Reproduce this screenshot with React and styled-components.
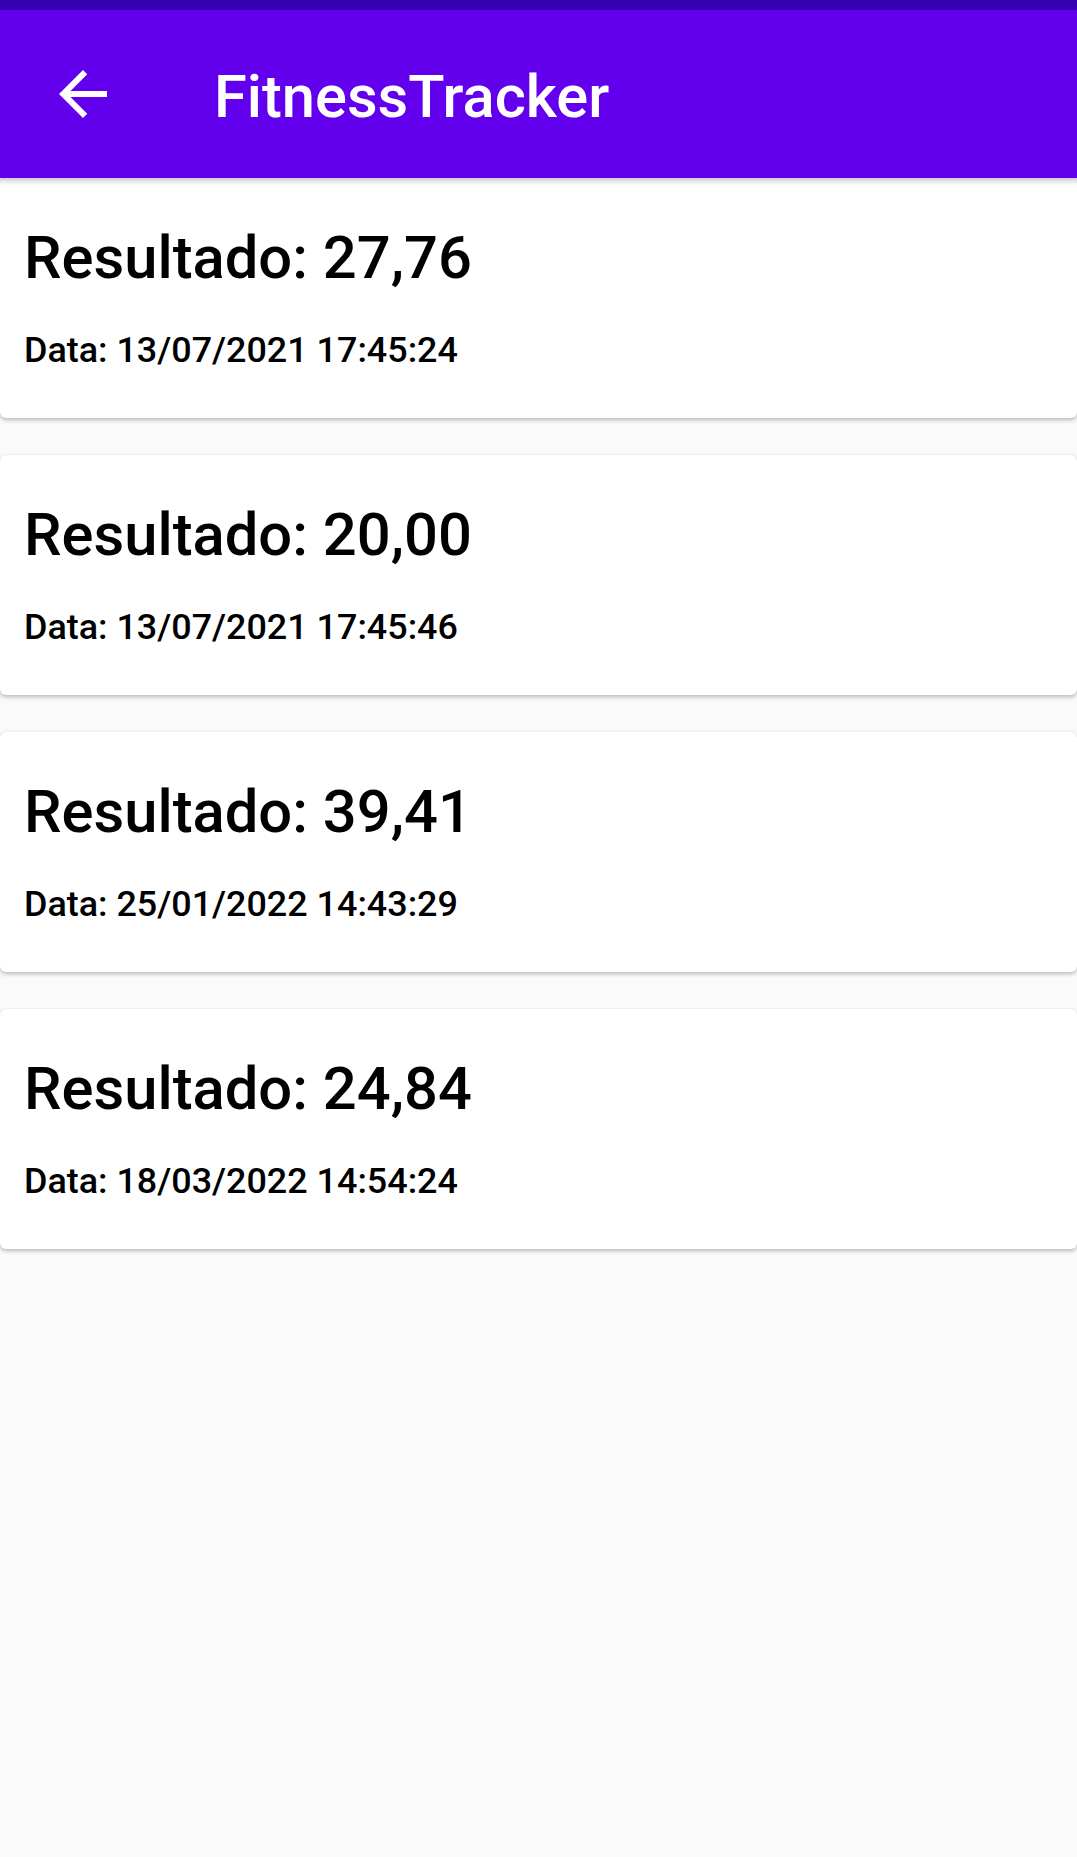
import React from "react";
import styled, { createGlobalStyle } from "styled-components";

const GlobalStyle = createGlobalStyle`
  html, body {
    margin: 0;
    padding: 0;
    background: #fafafa;
  }
  body {
    font-family: Roboto, "Noto Sans", "Liberation Sans", sans-serif;
  }
  #root {
    min-height: 100vh;
    background: #fafafa;
  }
`;

const Screen = styled.div`
  display: flex;
  flex-direction: column;
  min-height: 1857px;
  background: #fafafa;
`;

const StatusBar = styled.div`
  height: 10px;
  background: #3700b3;
`;

const AppBar = styled.header`
  position: relative;
  z-index: 2;
  display: flex;
  align-items: center;
  height: 168px;
  background: #6200ee;
  box-shadow: 0 3px 6px rgba(0, 0, 0, 0.22);
`;

const BackButton = styled.button`
  display: flex;
  align-items: center;
  justify-content: center;
  width: 72px;
  height: 72px;
  margin-left: 47px;
  padding: 0;
  border: none;
  background: transparent;
  color: #ffffff;
  cursor: pointer;
`;

const Title = styled.h1`
  margin: 0 0 0 95px;
  padding-top: 5px;
  font-family: Roboto, "Noto Sans", sans-serif;
  font-weight: 500;
  font-size: 59.6px;
  color: #ffffff;
  letter-spacing: 0;
`;

const List = styled.main`
  display: flex;
  flex-direction: column;
  gap: 37px;
`;

const Card = styled.article`
  display: flex;
  flex-direction: column;
  height: 240px;
  box-sizing: border-box;
  padding: 45px 24px 0 24px;
  background: #ffffff;
  border-radius: 6px;
  box-shadow: 0 2px 4px rgba(0, 0, 0, 0.26), 0 0 1px rgba(0, 0, 0, 0.12);
`;

const Result = styled.div`
  font-family: Roboto, "Noto Sans", sans-serif;
  font-weight: 500;
  font-size: 59.7px;
  line-height: 70px;
  color: #000000;
`;

const DateLine = styled.div`
  margin-top: 36px;
  font-family: Roboto, "Noto Sans", sans-serif;
  font-weight: 500;
  font-size: 35.9px;
  line-height: 42px;
  color: #000000;
`;

const ArrowBack = () => (
  <svg width="72" height="72" viewBox="0 0 24 24" fill="currentColor" aria-hidden="true">
    <path d="M20 11H7.83l5.59-5.59L12 4l-8 8 8 8 1.41-1.41L7.83 13H20v-2z" />
  </svg>
);

const results = [
  { value: "27,76", date: "13/07/2021 17:45:24" },
  { value: "20,00", date: "13/07/2021 17:45:46" },
  { value: "39,41", date: "25/01/2022 14:43:29" },
  { value: "24,84", date: "18/03/2022 14:54:24" },
];

export default function App() {
  return (
    <>
      <GlobalStyle />
      <Screen>
        <StatusBar />
        <AppBar>
          <BackButton aria-label="Voltar">
            <ArrowBack />
          </BackButton>
          <Title>FitnessTracker</Title>
        </AppBar>
        <List>
          {results.map((r) => (
            <Card key={r.date}>
              <Result>Resultado: {r.value}</Result>
              <DateLine>Data: {r.date}</DateLine>
            </Card>
          ))}
        </List>
      </Screen>
    </>
  );
}
